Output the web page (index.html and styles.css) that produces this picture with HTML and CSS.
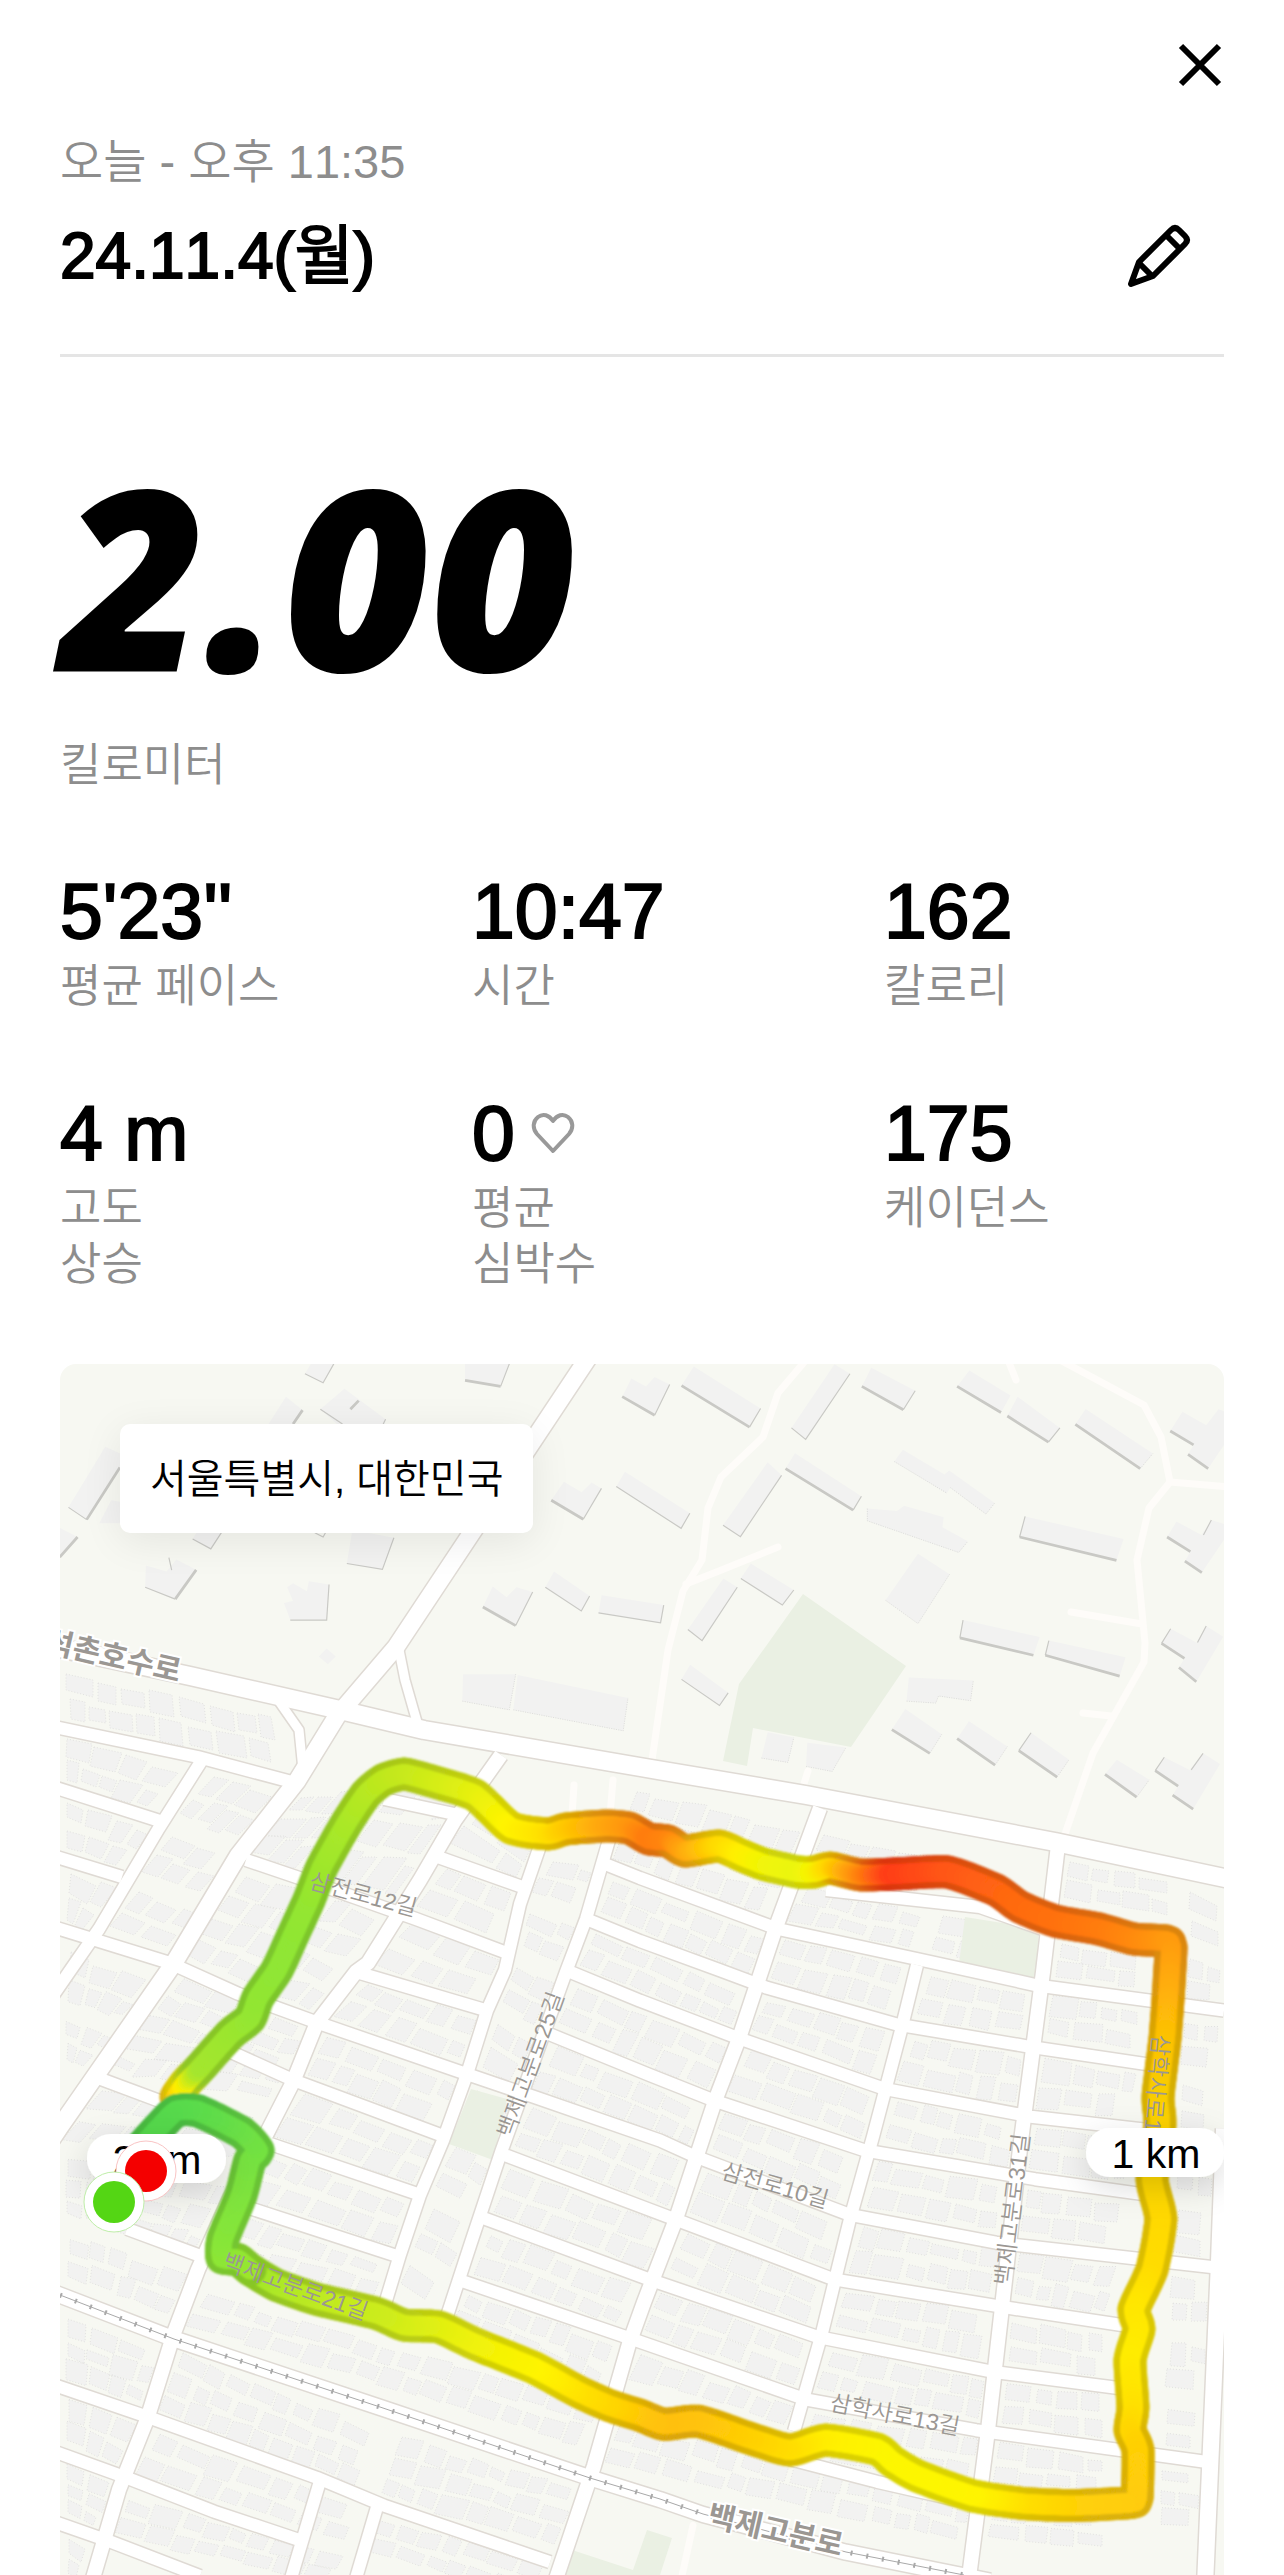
FILE: index.html
```html
<!DOCTYPE html>
<html lang="ko">
<head>
<meta charset="utf-8">
<meta name="viewport" content="width=device-width, initial-scale=1">
<title>24.11.4(월)</title>
<link rel="stylesheet" href="styles.css">
</head>
<body>
<main class="page">
  <div class="topbar">
    <button class="icon-button" type="button" aria-label="닫기">
      <svg width="48" height="48" viewBox="0 0 48 48"><path d="M5 5 43 43M43 5 5 43" fill="none" stroke="#000" stroke-width="6"/></svg>
    </button>
  </div>

  <header class="header">
    <div>
      <p class="when">오늘 - 오후 11:35</p>
      <h1 class="title">24.11.4(월)</h1>
    </div>
    <button class="icon-button edit" type="button" aria-label="이름 편집">
      <svg width="66" height="66" viewBox="0 0 66 66" fill="none" stroke="#000" stroke-width="6" stroke-linejoin="round" stroke-linecap="round"><path d="M5 61 13 39 45 7Q49 3 53 7L59 13Q63 17 59 21L27 53Z"/><path d="M13 40 26 53M41 13 53 25" stroke-linecap="butt"/></svg>
    </button>
  </header>

  <section class="distance">
    <p class="distance-value">2.00</p>
    <p class="label">킬로미터</p>
  </section>

  <section class="stats">
    <div><p class="value">5'23''</p><p class="label">평균 페이스</p></div>
    <div><p class="value">10:47</p><p class="label">시간</p></div>
    <div><p class="value">162</p><p class="label">칼로리</p></div>
    <div><p class="value">4 m</p><p class="label">고도<br>상승</p></div>
    <div>
      <p class="value with-icon">0
        <svg width="44" height="42" viewBox="0 0 44 42"><path d="M22 39 6 22C1 16 2 9 7 5 12 1 18 3 22 9 26 3 32 1 37 5 42 9 43 16 38 22Z" fill="none" stroke="#999" stroke-width="4" stroke-linejoin="round"/></svg>
      </p>
      <p class="label">평균<br>심박수</p>
    </div>
    <div><p class="value">175</p><p class="label">케이던스</p></div>
  </section>

  <section class="map" aria-label="러닝 경로">
    <svg class="map-canvas" viewBox="60 1364 1164 1211">
      <defs>
        <filter id="pill-shadow" x="-40%" y="-60%" width="180%" height="260%"><feDropShadow dx="0" dy="10" stdDeviation="16" flood-opacity=".14"/></filter>
        <filter id="soften"><feGaussianBlur stdDeviation=".8"/></filter>
      </defs>
      <rect x="60" y="1364" width="1164" height="1211" fill="#f7f8f2"/>

      <g id="houses" class="house"></g>

      <!-- parks -->
      <g class="park">
        <path d="M803 1594 906 1666 851 1747 753 1728 747 1766 723 1761 739 1684Z"/>
        <path d="M965 1917 1039 1929 1035 1979 959 1964Z"/>
        <path d="M471 2089 507 2099 493 2160 449 2144Z"/>
        <path d="M566 2548 633 2570 647 2530 672 2538 660 2575 560 2575Z"/>
      </g>

      <!-- apartment buildings, north-east -->
      <g class="tower" transform="translate(640 1350) scale(.3954)">
        <path d="M105 90 136 42 305 148 277 195ZM383 197 492 36 531 60 419 226ZM561 92 585 45 696 103 666 151ZM802 92 833 52 937 115 913 158ZM929 167 955 118 1062 197 1033 233ZM1101 188 1127 149 1297 262 1265 300ZM1341 205 1372 156 1432 190 1463 150 1477 155 1477 240 1437 300 1386 264 1400 240ZM-60 345-38 308 126 413 104 451ZM210 443 323 284 358 317 254 472ZM368 300 392 261 560 370 539 405ZM643 282 665 252 770 315 782 305 897 387 875 415 785 348 776 362ZM575 401 650 407 668 394 768 423 765 448 829 484 806 512 575 432ZM703 515 783 567 703 692 621 633ZM960 473 974 421 1223 478 1205 532ZM1333 473 1357 434 1420 468 1445 430 1477 440 1477 480 1421 563 1378 534 1392 510ZM255 578 280 540 389 607 360 645ZM121 707 211 578 246 600 157 735ZM809 728 817 683 1011 726 995 772ZM1025 772 1034 735 1228 777 1213 825ZM1319 742 1342 705 1407 740 1432 698 1475 725 1407 839 1363 803 1377 780ZM105 833 127 796 223 867 201 899ZM680 828 843 836 836 887 755 875 748 893 674 888ZM637 960 671 908 763 972 733 1020ZM802 983 832 939 929 1003 898 1050ZM958 1013 989 968 1085 1036 1055 1080ZM1176 1073 1206 1036 1288 1087 1256 1131ZM1303 1064 1326 1030 1390 1062 1424 1020 1467 1047 1399 1161 1347 1126 1361 1103ZM323 967 389 980 374 1043 307 1032ZM423 993 521 1005 486 1066 420 1053ZM-45 118-22 72 15 92 37 68 75 87 37 165ZM-105 665-97 620 60 645 52 690Z"/>
        <path class="shade" d="M105 90 277 195M561 92 666 151M802 92 913 158M929 167 1033 233M1101 188 1265 300M1341 205 1400 240M1386 264 1437 300M368 300 539 405M960 473 1205 532M1333 473 1392 510M1378 534 1421 563M809 728 995 772M1025 772 1213 825M1319 742 1377 780M1363 803 1407 839M637 960 733 1020M802 983 898 1050M958 1013 1055 1080M1176 1073 1256 1131M1303 1064 1361 1103M1347 1126 1399 1161M-45 118 37 165"/>
        <path class="shade thin" d="M277 195 305 148M383 197 419 226 531 60M666 151 696 103M-60 345 104 451 126 413M210 443 254 472 358 317M539 405 560 370M960 473 974 421M255 578 360 645 389 607M121 707 157 735 246 600M809 728 817 683M1025 772 1034 735M105 833 201 899 223 867M37 165 75 87M-105 665 52 690 60 645M1425 468 1445 430M1410 740 1432 698M1394 1062 1424 1020M1033 233 1062 197M1319 742 1342 705M1303 1064 1326 1030M958 1013 989 968"/>
        <path class="dots" d="M643 282 776 362M785 348 875 415 897 387M575 401V432L806 512 829 484M621 633 703 692 783 567M674 888 748 893 755 875 836 887 843 836M307 1032 374 1043 389 980M420 1053 486 1066 521 1005M1265 300 1297 262M733 1020 763 972M898 1050 929 1003M1055 1080 1085 1036M1256 1131 1288 1087"/>
      </g>
      <!-- apartment buildings, north-west -->
      <g class="tower" transform="translate(40 1350) scale(.3954)">
        <path d="M670 60 685 35H743L716 83ZM1075 35H1187L1165 92 1075 77ZM578 187 622 118 664 152 640 187ZM709 150 770 98 874 175 870 200H765ZM72 398 165 245 210 265 202 297 118 429ZM50 450 95 473 50 524ZM266 600 268 545 320 560 345 530 395 556 342 630ZM386 478 400 455H465L432 503ZM776 540 790 455 895 475 866 555ZM633 683 617 640 640 635 625 600 640 590 675 610 680 585 731 593 725 683ZM1293 380 1325 333 1370 360 1395 335 1420 350 1374 428ZM1120 650 1145 598 1180 625 1205 600 1246 612 1203 697ZM1278 600 1300 560 1390 622 1369 660ZM705 775 725 755 748 775 728 795ZM1070 820H1203L1187 910 1068 888ZM1208 822 1487 880 1475 963 1197 910ZM150 438 180 380 210 385V438Z"/>
        <path class="shade" d="M1075 77 1165 92M118 429 202 297M50 524 95 473M342 630 395 556M1293 380 1374 428M1120 650 1203 697M640 187 664 152M785 150 806 128"/>
        <path class="shade thin" d="M670 60 716 83 743 35M1165 92 1187 35M709 150 765 187M868 187 874 175M72 398 118 429M266 600 342 630M326 525 333 557M386 478 432 503 460 460M695 462 716 473 722 462M776 540 866 555 895 475M633 683H725L731 593M1374 428 1420 350M1203 697 1246 612M1278 600 1369 660 1390 622"/>
        <path class="dots" d="M1068 888 1187 910 1203 820M1197 910 1475 963 1487 880"/>
      </g>

      <g id="streets"></g>

      <!-- railway -->
      <path class="rail" d="M60 2295 174 2339 380 2407 590 2478 660 2499 703 2514 846 2552 964 2575"/>
      <path class="rail ties" d="M60 2295 174 2339 380 2407 590 2478 660 2499 703 2514 846 2552 964 2575"/>

      <g id="route" filter="url(#soften)"></g>

      <g class="road-name">
        <text transform="translate(308 1888) rotate(15)">삼전로12길</text>
        <text transform="translate(512 2139) rotate(-70)">백제고분로25길</text>
        <text transform="translate(221 2268) rotate(20)">백제고분로21길</text>
        <text transform="translate(720 2178) rotate(16)">삼전로10길</text>
        <text transform="translate(1011 2286) rotate(-83)">백제고분로31길</text>
        <text transform="translate(1153 2034) rotate(95)">삼학사로13길</text>
        <text transform="translate(829 2410) rotate(11)">삼학사로13길</text>
      </g>
      <g class="road-name major">
        <text transform="translate(44 1651) rotate(13)">석촌호수로</text>
        <text transform="translate(706 2525) rotate(13)">백제고분로</text>
      </g>

      <!-- kilometre marks, start and finish -->
      <g filter="url(#pill-shadow)">
        <rect x="1086" y="2128" width="138" height="49" rx="24" fill="#fff"/>
        <rect x="87" y="2134" width="139" height="49" rx="24" fill="#fff"/>
      </g>
      <text class="mark" x="1156" y="2168">1 km</text>
      <text class="mark" x="157" y="2174">2 km</text>
      <circle cx="146" cy="2171" r="30" fill="#fff" stroke="#f9c4c4"/>
      <circle cx="146" cy="2171" r="21" fill="#f40000"/>
      <circle cx="114" cy="2202" r="30" fill="#fff" stroke="#bfeea9"/>
      <circle cx="114" cy="2202" r="21" fill="#54d614"/>
    </svg>
    <p class="place">서울특별시, 대한민국</p>
  </section>
</main>
<script src="map.js"></script>
</body>
</html>
```
FILE: styles.css
```css
* {
  box-sizing: border-box;
}

body {
  margin: 0;
  background: #fff;
  color: #000;
  font-family: "Liberation Sans", "Noto Sans CJK KR", sans-serif;
  font-kerning: none;
}

p,
h1 {
  margin: 0;
}

.page {
  padding: 41px 60px 0;
}

.topbar {
  display: flex;
  justify-content: flex-end;
}

.icon-button {
  display: flex;
  padding: 0;
  border: 0;
  background: none;
  cursor: pointer;
}

.header {
  display: flex;
  justify-content: space-between;
  align-items: flex-end;
  padding: 45px 0 58px;
  border-bottom: 3px solid #e5e5e5;
}

.when,
.label {
  color: #8d8d8d;
  font-size: 45px;
  font-weight: 350;
  line-height: 56px;
}

.when {
  font-size: 47px;
}

.title {
  margin-top: 26px;
  font-size: 64px;
  font-weight: 350;
  line-height: 80px;
  -webkit-text-stroke: 2px #000;
}

.edit {
  margin: 0 32px 7px 0;
}

.distance {
  padding-top: 90px;
}

.distance-value {
  margin-bottom: 35px;
  font-family: "Open Sans", sans-serif;
  font-size: 252px;
  font-style: italic;
  font-weight: 800;
  line-height: 256px;
}

.stats {
  display: grid;
  grid-template-columns: repeat(3, 1fr);
  gap: 73px 72px;
  padding: 72px 0 71px;
}

.value {
  margin-bottom: 3px;
  font-size: 77px;
  line-height: 90px;
  -webkit-text-stroke: 2px #000;
}

.with-icon {
  display: flex;
  align-items: center;
  gap: 16px;
}

.map {
  position: relative;
  overflow: hidden;
  border-radius: 16px 16px 0 0;
}

.map-canvas {
  display: block;
  width: 100%;
}

.place {
  position: absolute;
  top: 60px;
  left: 60px;
  padding: 25px 30px 24px;
  border-radius: 10px;
  background: #fff;
  box-shadow: 0 8px 40px rgba(0, 0, 0, 0.08);
  font-size: 40px;
  font-weight: 350;
  line-height: 60px;
}

.park {
  fill: #eaf0e3;
}

.house {
  fill: #f2f2f1;
  stroke: #e2e2e0;
  stroke-dasharray: 1 2;
}

.tower {
  fill: #f2f2f1;
}

.shade {
  fill: none;
  stroke: #c9c9c5;
  stroke-width: 7;
}

.thin {
  stroke-width: 3;
}

.dots {
  fill: none;
  stroke: #d8d8d6;
  stroke-width: 2;
  stroke-dasharray: 3 3;
}

.street,
.street-edge,
.path {
  fill: none;
  stroke: #fff;
  stroke-linejoin: round;
}

.street-edge {
  stroke: #dfdad4;
}

.path {
  stroke: #fefcf9;
  stroke-width: 7;
  stroke-linecap: round;
}

.rail {
  fill: none;
  stroke: #a9a9a9;
}

.ties {
  stroke-width: 5;
  stroke-dasharray: 2 14;
}

.road-name {
  fill: #9b9793;
  font-size: 23px;
  font-weight: 350;
}

.major {
  font-size: 30px;
  font-weight: 700;
  paint-order: stroke;
  stroke: #fff;
  stroke-width: 4;
}

.mark {
  font-size: 41px;
  text-anchor: middle;
}
```
FILE: map.js
```js
const NS = 'http://www.w3.org/2000/svg';

function add(parent, className, d, width, stroke) {
  const el = document.createElementNS(NS, 'path');
  if (className) el.setAttribute('class', className);
  el.setAttribute('d', d);
  if (width) el.setAttribute('stroke-width', width);
  if (stroke) el.setAttribute('stroke', stroke);
  parent.appendChild(el);
}

const toCanvas = y => (y > 1960 ? 1960 + (y - 1960) * 0.992 : +y).toFixed(1);
const line = pts => 'M' + pts.map(([x, y]) => x + ' ' + toCanvas(y)).join('L');

// ---- Streets: [width, polyline] ----
const V0 = [[501,1755],[455,1820],[420,1880],[368,1963],[356,1972],[317,2023],[293,2083],[261,2146],[230,2200],[198,2272],[174,2336],[147,2423],[119,2494],[91,2590]];
const V1 = [[542,1840],[520,1904],[505,1970],[487,2011],[467,2075],[443,2142],[420,2197],[400,2257],[384,2310]];
const V2 = [[609,1840],[586,1919],[566,1972],[501,2154],[471,2245],[445,2325]];
const V3 = [[820,1808],[776,1927],[739,2039],[715,2102],[676,2221],[644,2305],[629,2347],[594,2470],[554,2590]];
const V4 = [[917,1965],[901,2031],[873,2138],[850,2221],[822,2336],[794,2435]];
const V5 = [[1058,1845],[1043,1972],[1020,2150],[988,2434],[968,2590]];
const V6 = [[1224,2130],[1219,2264],[1205,2590]];
const B = [[590,1355],[467,1540],[396,1647],[337,1716],[297,1781],[238,1856],[174,1963],[60,2128],[50,2143]];

const streets = [
  [12, [[50,1726],[198,1757],[292,1782]]],
  [12, [[202,1760],[159,1828],[99,1929],[72,1968],[50,2000]]],
  [12, [[50,1786],[163,1822]]],
  [12, [[50,1855],[122,1877]]],
  [12, [[50,1926],[170,1963],[238,1994],[317,2023],[467,2075],[534,2098],[660,2142],[695,2158],[850,2217],[996,2245],[1216,2270]]],
  [12, [[384,1799],[459,1815]]],
  [12, [[826,1890],[980,1907],[1048,1931]]],
  [12, [[246,1860],[317,1884],[416,1919],[507,1953]]],
  [12, [[435,1856],[528,1889]]],
  [12, [[605,1864],[640,1878],[778,1929],[917,1959],[1039,1986],[1224,2011]]],
  [12, [[586,1919],[640,1941],[719,1970],[767,1988],[897,2025],[1027,2047],[1160,2067]]],
  [12, [[570,1972],[640,2001],[739,2039],[885,2090],[1031,2118],[1155,2132]]],
  [12, [[356,1972],[487,2011]]],
  [12, [[550,2035],[650,2076],[715,2102],[865,2152],[1035,2181],[1150,2197]]],
  [12, [[225,2050],[293,2081],[445,2138]]],
  [12, [[503,2156],[666,2218],[834,2282],[1004,2310],[1135,2330]]],
  [12, [[98,2079],[170,2106]]],
  [12, [[260,2142],[424,2198]]],
  [12, [[480,2219],[652,2283],[818,2340],[992,2375],[1130,2393]]],
  [12, [[240,2207],[402,2260]]],
  [12, [[460,2283],[629,2341],[806,2403],[976,2434],[1207,2466]]],
  [12, [[127,2231],[205,2260]]],
  [12, [[770,2458],[877,2486],[960,2505]]],
  [12, [[50,2387],[143,2419],[317,2482],[384,2510],[550,2567]]],
  [12, [[50,2454],[127,2482],[214,2516],[300,2545]]],
  [12, [[50,2525],[107,2545],[200,2581]]],
  [12, [[321,2482],[289,2590]]],
  [12, [[378,2508],[354,2590]]],
  [14, V0], [12, V1], [12, V2], [14, V3], [12, V4], [14, V5], [16, V6],
  [9, [[398,1645],[405,1680],[417,1722]]],
  [9, [[276,1697],[299,1730],[303,1770]]],
  [15, [[50,2294],[174,2342],[380,2411],[590,2482],[660,2504],[703,2519],[846,2557],[990,2586]]],
  [17, B],
  [18, [[50,1646],[190,1676],[340,1710],[424,1730],[640,1767],[806,1795],[1055,1842],[1234,1880]]],
];
const paths = [
  [[806,1360],[778,1393],[763,1437],[721,1477],[708,1508],[702,1560],[683,1591],[668,1650],[652,1760]],
  [[686,1584],[719,1571],[778,1547]],
  [[1060,1360],[1144,1405],[1161,1437],[1170,1482],[1149,1508],[1137,1560],[1145,1643],[1144,1662],[1093,1753],[1065,1834]],
  [[1170,1482],[1230,1487]],
  [[1071,1612],[1142,1624]],
  [[1083,1713],[1111,1716]],
  [[1008,1360],[1016,1380]],
  [[808,1771],[802,1790]],
  [[574,1785],[572,1815]],
  [[613,1780],[610,1815]],
  [[693,2530],[680,2590]],
];
const streetLayer = document.getElementById('streets');
paths.forEach(p => add(streetLayer, 'path', line(p)));
streets.forEach(([w, p]) => add(streetLayer, 'street-edge', line(p), w + 3));
streets.forEach(([w, p]) => add(streetLayer, 'street', line(p), w));

// ---- Houses: rows of plots inside every block ----
let seed = 7;
const rand = () => (seed = (seed * 16807) % 2147483647) / 2147483647;

function xAt(poly, y) {
  for (let i = 1; i < poly.length; i++) {
    const [x0, y0] = poly[i - 1];
    const [x1, y1] = poly[i];
    if (y <= y1 || i === poly.length - 1) return x0 + (x1 - x0) * (y - y0) / (y1 - y0);
  }
}

const houseLayer = document.getElementById('houses');
function block(left, right, top, bottom) {
  const inset = 10;
  const tl = [xAt(left, top[0]) + inset, top[0] + inset];
  const bl = [xAt(left, bottom[0]) + inset, bottom[0] - inset + 3];
  const tr = [xAt(right, top[1]) - inset, top[1] + inset - 3];
  const br = [xAt(right, bottom[1]) - inset, bottom[1] - inset];
  const at = (u, v) => [0, 1].map(k => Math.round(
    (tl[k] * (1 - u) + tr[k] * u) * (1 - v) + (bl[k] * (1 - u) + br[k] * u) * v));
  const width = tr[0] - tl[0];
  const rows = Math.max(1, Math.round((bl[1] - tl[1]) / 22));
  let d = '';
  for (let r = 0; r < rows; r++) {
    let x = rand() * 5;
    while (x < width - 10) {
      const w = Math.min(13 + rand() * 15, width - x);
      const u0 = x / width;
      const u1 = (x + w) / width;
      const v0 = (r + rand() * 0.25) / rows;
      const v1 = (r + 0.72 + rand() * 0.25) / rows;
      const slant = (rand() - 0.5) * 0.16;
      d += line([at(u0, v0), at(u1, v0 + slant / 2), at(u1, v1), at(u0, v1 - slant / 2)]) + 'Z';
      x += w + 2 + rand() * 5;
    }
  }
  add(houseLayer, '', d);
}
function column(left, right, rows) {
  for (let i = 1; i < rows.length; i++) block(left, right, rows[i - 1], rows[i]);
}
const west = [[56,1360],[56,2600]];
const E = [[202,1765],[159,1828],[99,1929],[72,1968]];
const bend = [[1150,1900],[1146,2065],[1138,2130],[1134,2195],[1134,2250],[1112,2330],[1112,2500]];
column(west, [[280,1700],[290,1790]], [[1662,1708],[1728,1778]]);
column(west, E, [[1728,1765],[1789,1822],[1858,1880],[1929,1945]]);
column(E, B, [[1765,1785],[1822,1850],[1880,1905],[1935,1960]]);
column(west, B, [[1940,1975],[2010,2030],[2070,2080]]);
column(B, V0, [[1785,1770],[1862,1910],[1963,2023],[2079,2110],[2150,2170]]);
column(west, V0, [[2150,2180],[2225,2270],[2290,2330]]);
column(V0, V1, [[1785,1840],[1856,1888],[1910,1953],[1972,2011],[2023,2075],[2083,2138],[2144,2197],[2207,2258],[2270,2310]]);
column(V1, V2, [[1850,1860],[1900,1919],[1953,1974],[2011,2037],[2075,2098],[2138,2158],[2197,2221],[2257,2284],[2300,2325]]);
column(V2, V3, [[1780,1825],[1868,1929],[1919,1988],[1972,2039],[2035,2102],[2098,2158],[2158,2220],[2221,2284],[2284,2342],[2335,2410]]);
column(V3, V4, [[1825,1850],[1875,1905],[1929,1959],[1988,2025],[2039,2090],[2102,2152],[2158,2217],[2220,2282],[2284,2340],[2342,2403],[2390,2440]]);
column(V4, V5, [[1905,1931],[1962,1986],[2027,2047],[2090,2118],[2152,2181],[2217,2245],[2282,2310],[2340,2375],[2403,2434],[2470,2500]]);
column(V5, bend, [[1931,1950],[1986,2000],[2047,2065],[2118,2130],[2181,2195],[2245,2262],[2310,2330],[2375,2391],[2434,2455],[2500,2508],[2550,2565]]);
column([[1180,1870],[1150,2500]], V6, [[1880,1900],[1945,1960],[2010,2014],[2075,2085],[2140,2150],[2200,2210],[2268,2275],[2335,2340],[2400,2410],[2460,2466],[2540,2545]]);
column(V5, [[1180,1800],[1180,2000]], [[1850,1872],[1905,1930]]);
column(west, V0, [[2310,2345],[2389,2419],[2456,2482],[2528,2545],[2590,2600]]);
column(V0, [[400,2400],[340,2600]], [[2345,2430],[2423,2505],[2490,2555],[2550,2600]]);
column([[400,2400],[340,2600]], V3, [[2430,2485],[2510,2560],[2565,2620]]);
column(V0, V3, [[2285,2400],[2336,2465]]);
column(V3, V5, [[2415,2500],[2480,2560]]);

// ---- Route: [x, y, pace colour] ----
const route = [
  [176,2098,'ffc810'],[185,2085,'fff000'],[200,2069,'a5e62d'],[230,2035,'9de62e'],[250,2019,'96e630'],[258,1998,'92e632'],
  [277,1970,'90e634'],[293,1935,'90e634'],[309,1900,'94e630'],[322,1867,'9ce62c'],[346,1824,'a8e828'],[366,1794,'b4e822'],
  [383,1780,'bce81e'],[404,1774,'c4e81c'],[435,1782,'d0ec18'],[475,1795,'e4f010'],[511,1828,'fff400'],[548,1834,'ffe000'],
  [566,1829,'ffcc00'],[605,1826,'ffa80c'],[629,1828,'ff9810'],[649,1839,'ff7c10'],[668,1841,'ff8410'],[685,1851,'ffa510'],
  [719,1846,'ffd800'],[743,1856,'fff000'],[763,1864,'f4f406'],[798,1872,'eaf50c'],[814,1872,'f6f404'],[830,1868,'ffd800'],
  [861,1875,'ff8a10'],[893,1874,'ff3c14'],[948,1872,'ff5514'],[996,1890,'ff6412'],[1020,1907,'ff6a10'],[1055,1921,'ff7010'],
  [1099,1929,'ff7a10'],[1134,1939,'ff880c'],[1166,1941,'ff980a'],[1171,1947,'ff9a0a'],[1168,2000,'ffb008'],[1165,2039,'fdc006'],
  [1158,2098,'f8cc04'],[1160,2126,'fcd004'],[1152,2181,'ffd800'],[1161,2221,'ffd800'],[1152,2272,'ffdc00'],[1134,2312,'ffe600'],
  [1139,2332,'ffe800'],[1130,2363,'ffec00'],[1133,2411,'ffe200'],[1130,2434,'ffd804'],[1138,2454,'ffd006'],[1137,2502,'ffcc08'],
  [1131,2507,'ffcc08'],[1075,2510,'ffd008'],[1024,2508,'ffdc00'],[972,2500,'fff400'],[917,2480,'fdf600'],[893,2466,'fdf600'],
  [877,2453,'fcf600'],[826,2444,'fff000'],[790,2454,'ffe000'],[755,2444,'ffd404'],[699,2425,'ffc408'],[664,2428,'ffc008'],
  [640,2419,'ffc408'],[609,2409,'ffd404'],[578,2395,'ffe000'],[534,2371,'fff400'],[475,2347,'f2f208'],[439,2330,'e4f010'],
  [404,2328,'d8ee16'],[376,2316,'cdec1c'],[317,2302,'c0ea20'],[277,2288,'b0e826'],[250,2272,'a0e62a'],[238,2262,'94e630'],
  [222,2260,'8fe634'],[223,2241,'88e638'],[241,2197,'80e43c'],[250,2162,'78e240'],[258,2152,'74e240'],[242,2134,'6ee044'],
  [198,2112,'5cdc4a'],[176,2112,'58da4c'],[158,2130,'54d84c'],[140,2150,'54d84c'],
];
const rgb = hex => [0, 2, 4].map(i => parseInt(hex.slice(i, i + 2), 16));
function spline(a, b, c, d, t) {
  const curve = 0.5 * (2 * b + (c - a) * t + (2 * a - 5 * b + 4 * c - d) * t * t + (3 * b - a - 3 * c + d) * t * t * t);
  return (curve + b + (c - b) * t) / 2;
}
const routeLayer = document.getElementById('route');
function drawRoute(from, to) {
  const pieces = [];
  for (let i = from; i < to; i++) {
    const p = [i - 1, i, i + 1, i + 2].map(k => route[Math.min(Math.max(k, 0), route.length - 1)]);
    const c0 = rgb(p[1][2]);
    const c1 = rgb(p[2][2]);
    const steps = Math.max(2, Math.round(Math.hypot(p[2][0] - p[1][0], p[2][1] - p[1][1]) / 4));
    const at = t => [0, 1].map(k => spline(p[0][k], p[1][k], p[2][k], p[3][k], t).toFixed(1));
    for (let s = 0; s < steps; s++) {
      const t = (s + 0.5) / steps;
      pieces.push([line([at(s / steps), at((s + 1) / steps)]), c0.map((v, k) => v + (c1[k] - v) * t)]);
    }
  }
  [[33, 0.86], [20, 1]].forEach(([w, shade]) => pieces.forEach(([d, c]) =>
    add(routeLayer, '', d, w, `rgb(${c.map(v => Math.round(v * shade)).join(',')})`)));
}
routeLayer.setAttribute('stroke-linecap', 'round');
drawRoute(0, route.length - 12);
drawRoute(route.length - 12, route.length - 1);
```
